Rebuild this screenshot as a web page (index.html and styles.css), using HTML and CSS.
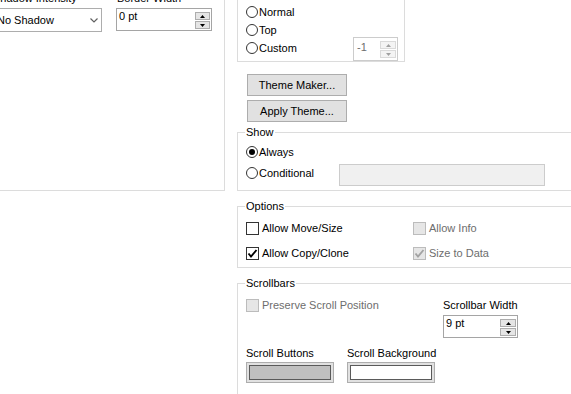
FILE: index.html
```html
<!DOCTYPE html>
<html lang="en">
<head>
    <meta charset="UTF-8">
    <title>Layout Properties</title>
    <link rel="stylesheet" href="styles.css">
</head>
<body>

<div class="form">
    <!-- left: shadow / border -->
    <div class="col-left">
        <div class="group group-frame">
            <div class="fields">
                <div class="field field-shadow">
                    <div class="label">Shadow Intensity</div>
                    <div class="combo">
                        <span>No Shadow</span>
                        <svg width="8" height="5" viewBox="0 0 8 5"><polyline points="0.5,0.5 4,4 7.5,0.5" fill="none" stroke="#606060" stroke-width="1.2"/></svg>
                    </div>
                </div>
                <div class="field field-border">
                    <div class="label">Border Width</div>
                    <div class="spin spin-border">
                        <span class="spin-text">0 pt</span>
                        <div class="spin-btns">
                            <span class="spin-btn"><svg width="5" height="3" viewBox="0 0 5 3"><polygon points="0,3 2.5,0 5,3" fill="#000"/></svg></span>
                            <span class="spin-btn"><svg width="5" height="3" viewBox="0 0 5 3"><polygon points="0,0 5,0 2.5,3" fill="#000"/></svg></span>
                        </div>
                    </div>
                </div>
            </div>
        </div>
    </div>

    <!-- right: layer, theme, show, options, scrollbars -->
    <div class="col-right">
        <div class="group group-layer">
            <div class="row"><span class="radio checked"></span>Bottom</div>
            <div class="row"><span class="radio"></span>Normal</div>
            <div class="row"><span class="radio"></span>Top</div>
            <div class="row row-custom">
                <span class="row-inline"><span class="radio"></span>Custom</span>
                <div class="spin spin-custom disabled">
                    <span class="spin-text">-1</span>
                    <div class="spin-btns">
                        <span class="spin-btn"><svg width="5" height="3" viewBox="0 0 5 3"><polygon points="0,3 2.5,0 5,3" fill="#a0a0a0"/></svg></span>
                        <span class="spin-btn"><svg width="5" height="3" viewBox="0 0 5 3"><polygon points="0,0 5,0 2.5,3" fill="#a0a0a0"/></svg></span>
                    </div>
                </div>
            </div>
        </div>

        <div class="theme-btns">
            <button class="btn">Theme Maker...</button>
            <button class="btn">Apply Theme...</button>
        </div>

        <div class="group group-show">
            <div class="group-title">Show</div>
            <div class="row row-always"><span class="radio checked"></span>Always</div>
            <div class="row-cond">
                <div class="row cond-label"><span class="radio"></span>Conditional</div>
                <div class="textbox disabled"></div>
            </div>
        </div>

        <div class="group group-options">
            <div class="group-title">Options</div>
            <div class="check-grid">
                <div class="row"><span class="check"></span>Allow Move/Size</div>
                <div class="row off"><span class="check"></span>Allow Info</div>
                <div class="row"><span class="check"><svg width="11" height="11" viewBox="0 0 11 11"><polyline points="1.5,5.5 4,8.5 9.5,2" fill="none" stroke="#000" stroke-width="1.9"/></svg></span>Allow Copy/Clone</div>
                <div class="row off"><span class="check"><svg width="11" height="11" viewBox="0 0 11 11"><polyline points="1.5,5.5 4,8.5 9.5,2" fill="none" stroke="#a3a3a3" stroke-width="1.9"/></svg></span>Size to Data</div>
            </div>
        </div>

        <div class="group group-scroll">
            <div class="group-title">Scrollbars</div>
            <div class="scroll-top">
                <div class="row off preserve"><span class="check"></span>Preserve Scroll Position</div>
                <div class="field">
                    <div class="row">Scrollbar Width</div>
                    <div class="spin spin-width">
                        <span class="spin-text">9 pt</span>
                        <div class="spin-btns">
                            <span class="spin-btn"><svg width="5" height="3" viewBox="0 0 5 3"><polygon points="0,3 2.5,0 5,3" fill="#000"/></svg></span>
                            <span class="spin-btn"><svg width="5" height="3" viewBox="0 0 5 3"><polygon points="0,0 5,0 2.5,3" fill="#000"/></svg></span>
                        </div>
                    </div>
                </div>
            </div>
            <div class="swatches">
                <div class="field swatch-field">
                    <div class="row">Scroll Buttons</div>
                    <div class="swatch"><div class="swatch-fill" style="background:#c0c0c0"></div></div>
                </div>
                <div class="field swatch-field">
                    <div class="row">Scroll Background</div>
                    <div class="swatch"><div class="swatch-fill" style="background:#ffffff"></div></div>
                </div>
            </div>
        </div>
    </div>
</div>

</body>
</html>
```

FILE: styles.css
```css
body {
    margin: 0;
    width: 571px;
    height: 394px;
    overflow: hidden;
    background: #fff;
    color: #000;
    font-family: "Liberation Sans", Arial, sans-serif;
    font-size: 11px;
}
.form {
    display: flex;
    align-items: flex-start;
    gap: 12px;
    margin: -24px 0 0 -20px;
}
.col-left {
    flex: none;
    width: 245px;
}
.col-right {
    flex: none;
    width: 360px;
}
.group {
    box-sizing: border-box;
    border: 1px solid #dcdcdc;
    padding: 0 8px;
}
.group-title {
    width: max-content;
    margin: -7px 0 0 -1px;
    padding: 0 1px;
    line-height: 13px;
    background: #fff;
}
.row {
    display: flex;
    align-items: center;
    height: 18px;
    line-height: 18px;
    white-space: nowrap;
}
.row.off {
    color: #6d6d6d;
}

/* left frame */
.group-frame {
    height: 215px;
    padding: 15px 0 0 11px;
}
.fields {
    display: flex;
    gap: 14px;
}
.label {
    line-height: 13px;
    padding-left: 1px;
    margin-bottom: 3px;
    white-space: nowrap;
}
.field-shadow {
    width: 110px;
}
.field-border {
    width: 96px;
}
.combo {
    box-sizing: border-box;
    height: 24px;
    border: 1px solid #adadad;
    display: flex;
    align-items: center;
    justify-content: space-between;
    padding: 0 3px 0 4px;
}

/* spin boxes */
.spin {
    box-sizing: border-box;
    display: flex;
    justify-content: space-between;
    border: 1px solid #a5a5a5;
    background: #fff;
    padding: 1px 1px 0 1px;
}
.spin-text {
    padding-left: 1px;
    line-height: 13px;
}
.spin-btns {
    display: flex;
    flex-direction: column;
    gap: 1px;
    padding-top: 2px;
}
.spin-btn {
    box-sizing: border-box;
    width: 15px;
    height: 8px;
    border: 1px solid #adadad;
    background: #e5e5e5;
    display: flex;
    align-items: center;
    justify-content: center;
}
.spin-border {
    width: 96px;
    height: 23px;
}
.spin-custom {
    width: 45px;
    height: 24px;
    margin-top: -2px;
    align-self: flex-start;
}
.spin-custom .spin-text {
    padding-left: 2px;
    padding-top: 2px;
}
.spin-custom .spin-btn {
    width: 16px;
}
.spin.disabled {
    border-color: #cccccc;
    color: #6d6d6d;
}
.spin.disabled .spin-btn {
    border-color: #dadada;
    background: #f4f4f4;
}
.spin-width {
    width: 75px;
    height: 23px;
    margin-top: 1px;
}
.spin-width .spin-btn {
    width: 16px;
}

/* radios & checks */
.radio {
    box-sizing: border-box;
    flex: none;
    width: 12px;
    height: 12px;
    margin-right: 1px;
    border: 1px solid #333;
    border-radius: 50%;
    background: #fff;
    display: flex;
    align-items: center;
    justify-content: center;
}
.radio.checked::after {
    content: "";
    width: 6px;
    height: 6px;
    border-radius: 50%;
    background: #000;
}
.check {
    box-sizing: border-box;
    flex: none;
    width: 13px;
    height: 13px;
    margin-right: 3px;
    border: 1px solid #333;
    background: #fff;
    display: flex;
    align-items: center;
    justify-content: center;
}
.off .check {
    border-color: #bcbcbc;
    background: #e6e6e6;
}

/* layer group */
.group-layer {
    width: 168px;
    padding: 8px 6px 4px 8px;
}
.row-custom {
    justify-content: space-between;
    align-items: flex-start;
}
.row-inline {
    display: flex;
    align-items: center;
    height: 18px;
}

.theme-btns {
    display: flex;
    flex-direction: column;
    gap: 4px;
    margin: 12px 0 0 10px;
}
.btn {
    box-sizing: border-box;
    width: 100px;
    height: 22px;
    padding: 0;
    border: 1px solid #adadad;
    background: #e1e1e1;
    color: #000;
    font: inherit;
}

/* show group */
.group-show {
    margin-top: 10px;
    padding-bottom: 4px;
}
.row-always {
    margin-top: 4px;
}
.row-cond {
    display: flex;
    align-items: flex-start;
    margin-top: 3px;
}
.cond-label {
    width: 93px;
}
.textbox {
    box-sizing: border-box;
    width: 206px;
    height: 22px;
    border: 1px solid #cccccc;
    background: #f0f0f0;
}

/* options group */
.group-options {
    margin-top: 15px;
    padding-bottom: 5px;
}
.check-grid {
    display: grid;
    grid-template-columns: 167px auto;
    row-gap: 7px;
    margin-top: 6px;
}

/* scrollbars group */
.group-scroll {
    margin-top: 15px;
    padding-bottom: 20px;
}
.scroll-top {
    display: flex;
    align-items: flex-start;
    margin-top: 6px;
}
.preserve {
    width: 197px;
}
.swatches {
    display: flex;
    margin-top: 6px;
}
.swatch-field {
    width: 101px;
}
.swatch {
    box-sizing: border-box;
    width: 88px;
    height: 21px;
    border: 1px solid #adadad;
    background: #e1e1e1;
    padding: 2px;
}
.swatch-fill {
    box-sizing: border-box;
    height: 100%;
    border: 1px solid #5a5a5a;
}
```
